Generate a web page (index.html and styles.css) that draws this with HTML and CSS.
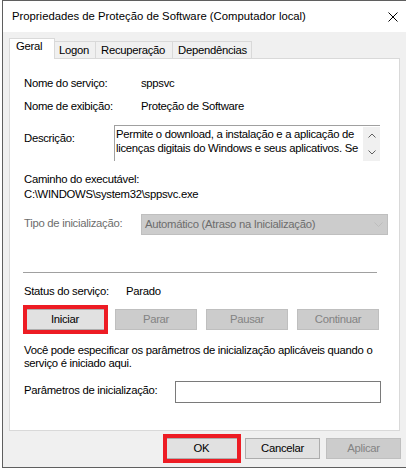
FILE: index.html
```html
<!DOCTYPE html>
<html lang="pt-BR">
<head>
  <meta charset="UTF-8">
  <title>Propriedades de Proteção de Software</title>
  <link rel="stylesheet" href="styles.css">
</head>
<body>
  <div class="window">
    <div class="titlebar">
      <span class="title">Propriedades de Proteção de Software (Computador local)</span>
      <svg class="close" width="10" height="10" viewBox="0 0 10 10">
        <path d="M0.5 0.5 L9.5 9.5 M9.5 0.5 L0.5 9.5" stroke="#000" stroke-width="1" fill="none"/>
      </svg>
    </div>

    <div class="dialog">
      <div class="tabs">
        <div class="tab active">Geral</div>
        <div class="tab tab-logon">Logon</div>
        <div class="tab tab-recovery">Recuperação</div>
        <div class="tab tab-deps">Dependências</div>
      </div>

      <div class="panel">
        <div class="row row-name">
          <span class="label">Nome do serviço:</span>
          <span>sppsvc</span>
        </div>
        <div class="row row-display">
          <span class="label">Nome de exibição:</span>
          <span>Proteção de Software</span>
        </div>

        <div class="row row-desc">
          <span class="label label-desc">Descrição:</span>
          <div class="desc-box">
            <div class="desc-text">Permite o download, a instalação e a aplicação de<br>licenças digitais do Windows e seus aplicativos. Se</div>
            <div class="desc-scroll">
              <svg width="8" height="5" viewBox="0 0 8 5"><path d="M0.5 4.5 L4 1 L7.5 4.5" stroke="#606060" fill="none"/></svg>
              <svg width="8" height="5" viewBox="0 0 8 5"><path d="M0.5 0.5 L4 4 L7.5 0.5" stroke="#606060" fill="none"/></svg>
            </div>
          </div>
        </div>

        <div class="path-label">Caminho do executável:</div>
        <div class="path-value">C:\WINDOWS\system32\sppsvc.exe</div>

        <div class="row row-startup">
          <span class="label disabled-text">Tipo de inicialização:</span>
          <div class="combo">
            <span>Automático (Atraso na Inicialização)</span>
            <svg width="9" height="5" viewBox="0 0 9 5"><path d="M0.5 0.5 L4.5 4.5 L8.5 0.5" stroke="#bdbdbd" fill="none"/></svg>
          </div>
        </div>

        <div class="separator"></div>

        <div class="row row-status">
          <span class="label label-status">Status do serviço:</span>
          <span>Parado</span>
        </div>

        <div class="service-buttons">
          <div class="highlight">
            <button class="btn">Iniciar</button>
          </div>
          <button class="btn" disabled>Parar</button>
          <button class="btn" disabled>Pausar</button>
          <button class="btn" disabled>Continuar</button>
        </div>

        <p class="hint">Você pode especificar os parâmetros de inicialização aplicáveis quando o<br>serviço é iniciado aqui.</p>

        <div class="row row-params">
          <span class="label label-params">Parâmetros de inicialização:</span>
          <div class="params-input"></div>
        </div>
      </div>

      <div class="footer">
        <div class="highlight">
          <button class="btn btn-footer">OK</button>
        </div>
        <button class="btn btn-footer">Cancelar</button>
        <button class="btn btn-footer" disabled>Aplicar</button>
      </div>
    </div>
  </div>
</body>
</html>
```

FILE: styles.css
```css
body {
  margin: 0;
  background: #fff;
  font-family: "Liberation Sans", Arial, sans-serif;
  font-size: 11.3px;
  line-height: 15px;
  color: #000;
  overflow: hidden;
}
.window {
  margin-left: 2px;
  width: 404px;
  height: 468px;
  box-sizing: border-box;
  border: 1px solid #5f5f5f;
  border-right: none;
  display: flex;
  flex-direction: column;
  background: #f0f0f0;
}
.titlebar {
  height: 31px;
  flex: none;
  background: #fff;
  display: flex;
  align-items: center;
  justify-content: space-between;
  padding: 0 8px 0 9px;
}
.close { display: block; }

.dialog { flex: 1; padding-top: 6px; letter-spacing: -0.28px; }
.tabs { display: flex; align-items: flex-end; padding-left: 6px; height: 20px; }
.tab {
  height: 17px;
  box-sizing: border-box;
  border-top: 1px solid #d9d9d9;
  border-right: 1px solid #d9d9d9;
  padding: 1px 0 0 5px;
  background: #f0f0f0;
  white-space: nowrap;
}
.tab-logon { width: 41px; padding-left: 4px; }
.tab-recovery { width: 77px; }
.tab-deps { width: 79px; }
.tab.active {
  height: 21px;
  margin-bottom: -1px;
  position: relative;
  z-index: 1;
  background: #fff;
  border-left: 1px solid #d9d9d9;
  padding: 0 0 0 6px;
  width: 46px;
}

.panel {
  margin-left: 6px;
  width: 391px;
  height: 373px;
  box-sizing: border-box;
  background: #fff;
  border: 1px solid #d9d9d9;
  padding: 16px 0 0 14px;
}
.row { display: flex; align-items: flex-start; }
.label { flex: none; width: 117px; }
.row-name { padding-top: 1px; }
.row-display { margin-top: 8px; }

.row-desc { margin-top: 11px; }
.label-desc { width: 90px; padding-top: 6px; }
.desc-box {
  width: 266px;
  height: 36px;
  box-sizing: border-box;
  border-top: 1px solid #a0a0a0;
  border-left: 1px solid #a0a0a0;
  display: flex;
}
.desc-text {
  flex: 1;
  padding: 1px 0 0 1px;
  line-height: 14px;
  white-space: nowrap;
  overflow: hidden;
}
.desc-scroll {
  width: 17px;
  margin-top: 1px;
  background: #f0f0f0;
  display: flex;
  flex-direction: column;
  align-items: center;
  justify-content: space-around;
}
.desc-scroll svg { display: block; }

.path-label { margin-top: 11px; }

.row-startup { margin-top: 12px; }
.disabled-text { color: #6d6d6d; padding-top: 2px; }
.combo {
  width: 247px;
  height: 21px;
  box-sizing: border-box;
  background: #cccccc;
  border: 1px solid #bfbfbf;
  color: #6d6d6d;
  line-height: 19px;
  padding: 0 4px 0 3px;
  display: flex;
  justify-content: space-between;
  align-items: center;
}

.separator {
  margin-top: 37px;
  width: 354px;
  margin-left: -1px;
  height: 1px;
  background: #a0a0a0;
}

.row-status { margin-top: 11px; }
.label-status { width: 102px; }

.service-buttons { display: flex; gap: 9px; margin-top: 10px; }
.btn {
  width: 82px;
  height: 21px;
  box-sizing: border-box;
  margin: 0;
  padding: 0;
  font: inherit;
  letter-spacing: inherit;
  line-height: 19px;
  color: #000;
  background: #e1e1e1;
  border: 1px solid #adadad;
}
.btn:disabled { background: #cccccc; border-color: #bfbfbf; color: #838383; }

.highlight { position: relative; }
.highlight::after {
  content: "";
  position: absolute;
  left: -1px;
  right: -2px;
  top: -4px;
  bottom: -4px;
  border: 4px solid #ed1c24;
}

.hint { margin: 14px 0 0; line-height: 13px; white-space: nowrap; }

.row-params { margin-top: 11px; }
.label-params { width: 151px; padding-top: 2px; }
.params-input {
  width: 206px;
  height: 22px;
  box-sizing: border-box;
  border: 1px solid #7a7a7a;
  background: #fff;
}

.footer {
  display: flex;
  justify-content: flex-end;
  gap: 6px;
  margin-top: 7px;
  padding-right: 5px;
}
.btn-footer { width: 75px; }
```
